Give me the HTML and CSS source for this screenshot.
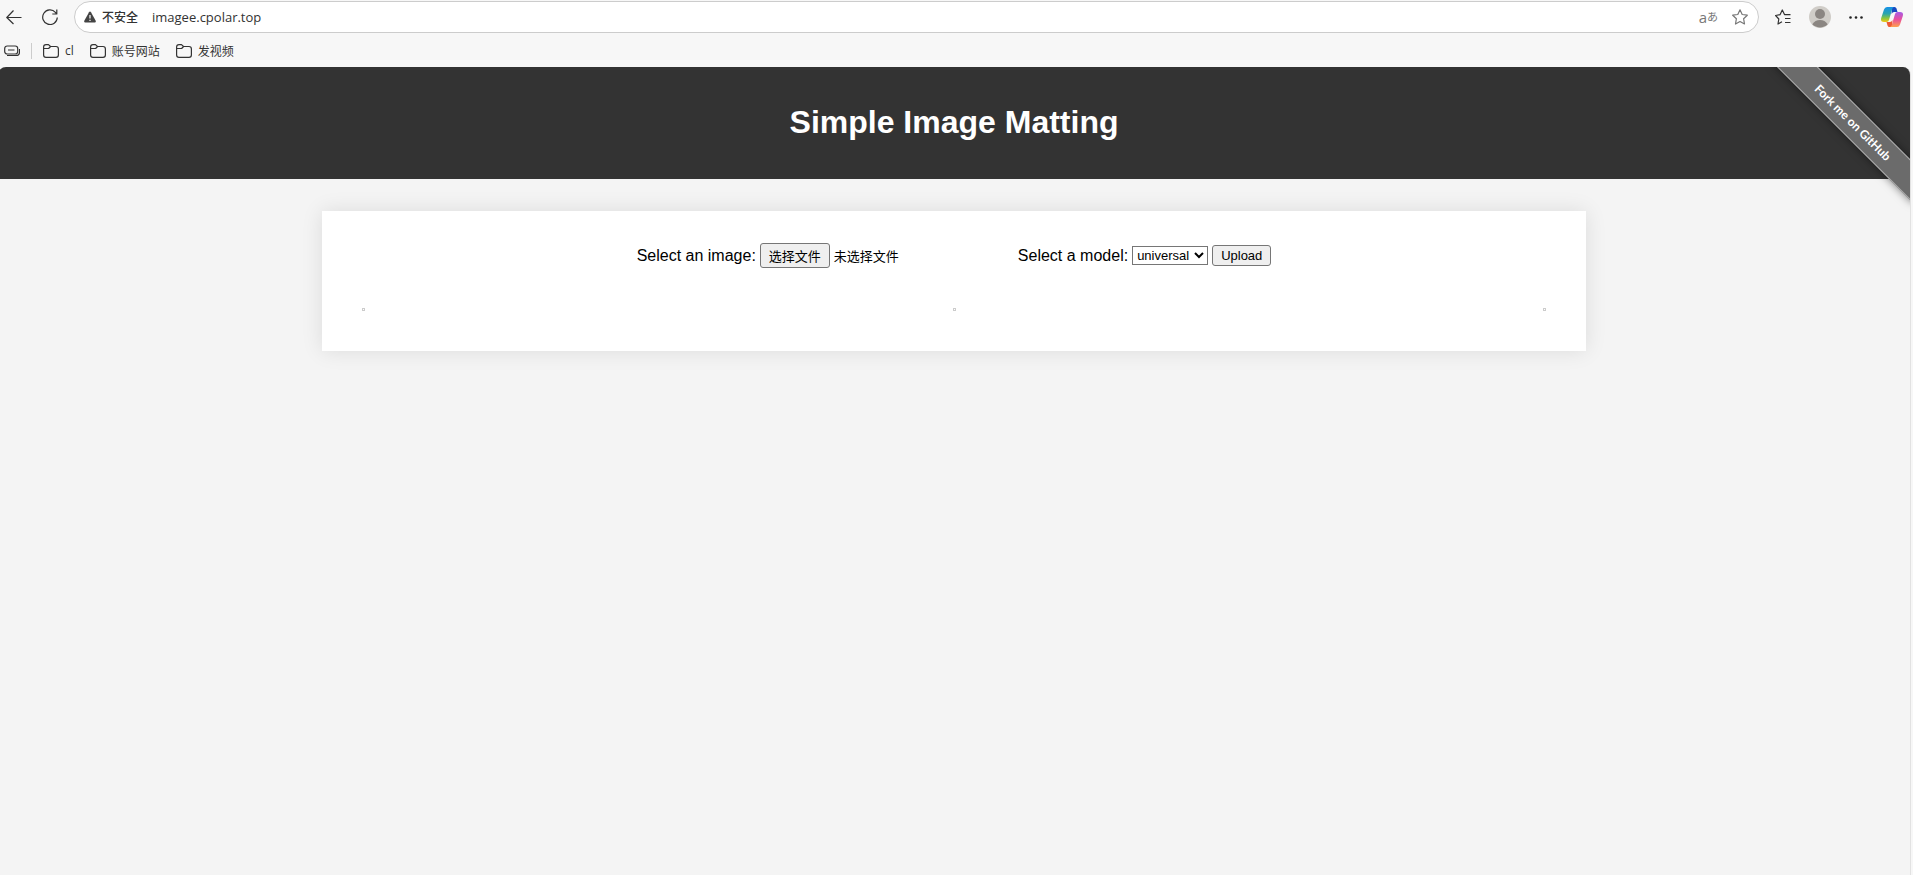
FILE: index.html
```html
<!DOCTYPE html>
<html lang="zh-CN">
<head>
  <meta charset="utf-8">
  <title>Simple Image Matting</title>
  <meta name="viewport" content="width=device-width, initial-scale=1">
  <link rel="stylesheet" href="styles.css">
</head>
<body>
  <!-- Browser toolbar -->
  <div class="toolbar">
    <button class="icon-button" aria-label="Back">
      <svg width="16" height="16" viewBox="0 0 16 16"><path d="M15.500 8.500H.8M7.500 1.500L.8 8.500l6.700 6.500"/></svg>
    </button>
    <button class="icon-button" aria-label="Refresh">
      <svg width="16" height="16" viewBox="0 0 16 16"><path d="M15.300 8.500a7.300 7.300 0 1 1-1.900-5.200l1.300 1.500M14.800.5v4.500h-4.500"/></svg>
    </button>
    <div class="address">
      <svg class="warning" width="12" height="12" viewBox="0 0 12 12"><path d="M6 .5Q6.600.5 7 1.200l4.700 8.600q.5 1.500-.9 1.700H1.200Q-.2 11.300.3 9.800L5 1.200Q5.400.5 6 .5z"/><path class="mark" d="M6 4v3.500M6 8.700v1.200"/></svg>
      <span class="insecure">不安全</span>
      <input class="url" type="text" value="imagee.cpolar.top" aria-label="Address">
      <button class="translate" aria-label="Translate"><span>a</span><small>あ</small></button>
      <button class="icon-button muted" aria-label="Add to favorites">
        <svg width="16" height="16" viewBox="0 0 16 16"><path d="M8 .8l2.200 4.700 5.100.7-3.700 3.500.9 5.300L8 12.500 3.500 15l.9-5.300L.7 6.200l5.100-.7z"/></svg>
      </button>
    </div>
    <div class="actions">
      <button class="icon-button" aria-label="Favorites">
        <svg width="16" height="16" viewBox="0 0 16 16"><path d="M7 12.800L3 15l.8-5L.6 6.500l4.400-.8L7.300 1l2.200 4.600h6M10 9.500h5.500M10 13.500h5.500"/></svg>
      </button>
      <button class="icon-button" aria-label="Profile">
        <svg class="filled" width="22" height="22" viewBox="0 0 22 22"><circle cx="11" cy="11" r="11" fill="#d0cdc8"/><circle cx="11" cy="8" r="5" fill="#8b8682"/><path d="M3.300 18.300Q6 14 11 14t7.700 4.300A11 11 0 0 1 3.300 18.300z" fill="#8b8682"/></svg>
      </button>
      <button class="icon-button" aria-label="More">
        <svg class="filled" width="14" height="16" viewBox="0 0 14 16"><circle cx="1.500" cy="8.500" r="1.300"/><circle cx="7" cy="8.500" r="1.300"/><circle cx="12.500" cy="8.500" r="1.300"/></svg>
      </button>
      <button class="icon-button" aria-label="Copilot">
        <svg class="filled" width="22" height="20" viewBox="0 0 22 20">
          <defs>
            <linearGradient id="cool" x1="0" y1="0" x2="0" y2="1"><stop offset="0" stop-color="#1590e8"/><stop offset=".45" stop-color="#2aa5ad"/><stop offset=".75" stop-color="#8ac53e"/><stop offset="1" stop-color="#f4c715"/></linearGradient>
            <linearGradient id="warm" x1="0" y1="0" x2="0" y2="1"><stop offset="0" stop-color="#a55be8"/><stop offset=".5" stop-color="#e94f9c"/><stop offset="1" stop-color="#ffa04c"/></linearGradient>
          </defs>
          <path fill="#1749c0" d="M11 0h2.500q1.500 0 2 1.500L16.500 5H13q-1.500 0-2.500 2z"/>
          <path fill="#ee5a35" d="M5.500 15H9q1.500 0 2.500-2L11 20H8.500Q7 20 6.500 18.500z"/>
          <path fill="url(#cool)" d="M6 0h7q-1.300.3-1.800 2L8 13q-.6 2-2.500 2H3Q-.8 15 .2 11L3 2.500Q3.800 0 6 0z"/>
          <path fill="url(#warm)" d="M16 20H9q1.300-.3 1.800-2L14 7q.6-2 2.500-2H19q3.800 0 2.800 4L19 17.500q-.8 2.500-3 2.500z"/>
        </svg>
      </button>
    </div>
  </div>

  <!-- Bookmarks bar -->
  <nav class="bookmarks">
    <svg width="16" height="12" viewBox="0 0 16 12"><rect x=".7" y="1" width="13" height="8" rx="2.500"/><path d="M4 5h6.500M3 10.500h9q3.500 0 3.500-3.500V4"/></svg>
    <span class="divider"></span>
    <a href="#"><svg width="16" height="14" viewBox="0 0 16 14"><path d="M.6 3Q.6.6 3 .6h2.500L7.500 2.500H13Q15.400 2.500 15.400 5v6q0 2.400-2.400 2.400H3Q.6 13.400.6 11zM.6 4.500h5l2-2"/></svg>cl</a>
    <a href="#"><svg width="16" height="14" viewBox="0 0 16 14"><path d="M.6 3Q.6.6 3 .6h2.500L7.500 2.500H13Q15.400 2.500 15.400 5v6q0 2.400-2.400 2.400H3Q.6 13.400.6 11zM.6 4.500h5l2-2"/></svg>账号网站</a>
    <a href="#"><svg width="16" height="14" viewBox="0 0 16 14"><path d="M.6 3Q.6.6 3 .6h2.500L7.500 2.500H13Q15.400 2.500 15.400 5v6q0 2.400-2.400 2.400H3Q.6 13.400.6 11zM.6 4.500h5l2-2"/></svg>发视频</a>
  </nav>

  <!-- Page -->
  <div class="page">
    <header>
      <h1>Simple Image Matting</h1>
    </header>
    <div class="ribbon-corner">
      <a class="ribbon" href="#">Fork me on GitHub</a>
    </div>

    <main class="container">
      <form class="upload-form" onsubmit="return false">
        <label for="pick">Select an image:</label>
        <div class="file-field">
          <button type="button" id="pick" onclick="document.getElementById('image').click()">选择文件</button>
          <span id="file-name">未选择文件</span>
          <input type="file" id="image" accept="image/*" hidden onchange="showName(this)">
        </div>
        <label for="model">Select a model:</label>
        <select id="model">
          <option>universal</option>
          <option>people</option>
        </select>
        <button type="submit" class="upload">Upload</button>
      </form>

      <div class="images">
        <div class="image"></div>
        <div class="image"></div>
        <div class="image"></div>
      </div>
    </main>
  </div>

  <script>
    // Show the name of the picked file
    function showName(input) {
      document.getElementById("file-name").textContent = input.files.length ? input.files[0].name : "未选择文件";
    }
  </script>
</body>
</html>
```
FILE: styles.css
```css
* {
  box-sizing: border-box;
}

body {
  display: flex;
  flex-direction: column;
  min-height: 100vh;
  margin: 0;
  background-color: #f7f7f7;
  font-family: "Liberation Sans", "Noto Sans CJK SC", sans-serif;
}

svg {
  display: block;
  flex: none;
  fill: none;
  stroke: #333;
  stroke-width: 1.2;
  stroke-linejoin: round;
}

.filled {
  fill: #222;
  stroke: none;
}

/* Browser toolbar */
.toolbar {
  display: flex;
  align-items: center;
  height: 34px;
  padding: 0 10px 0 6px;
  gap: 20px;
  font-family: "Open Sans", "Noto Sans CJK SC", sans-serif;
}

.icon-button {
  padding: 0;
  border: none;
  background: none;
}

.muted svg {
  stroke: #777;
}

.address {
  display: flex;
  flex: 1;
  align-items: center;
  height: 32px;
  margin-left: -4px;
  padding: 0 10px 0 9px;
  border: 1px solid #ccc;
  border-radius: 16px;
  background-color: #fff;
}

.warning {
  fill: #444;
  stroke: none;
}

.warning .mark {
  stroke: #fff;
}

.insecure {
  margin-left: 6px;
  color: #333;
  font-size: 12px;
  font-weight: 500;
}

.url {
  flex: 1;
  margin-left: 14px;
  padding: 0;
  border: none;
  outline: none;
  background: none;
  color: #333;
  font-family: inherit;
  font-size: 13px;
}

.translate {
  display: flex;
  align-items: center;
  margin-right: 14px;
  padding: 0;
  border: none;
  background: none;
  color: #777;
  font-family: inherit;
  font-size: 15px;
  line-height: 16px;
}

.translate small {
  font-size: 11px;
}

.actions {
  display: flex;
  align-items: center;
  margin-left: -4px;
  gap: 18px;
}

/* Bookmarks bar */
.bookmarks {
  display: flex;
  align-items: center;
  height: 33px;
  padding: 0 4px;
  gap: 16px;
  font-family: "Open Sans", "Noto Sans CJK SC", sans-serif;
  font-size: 12px;
}

.bookmarks .divider {
  width: 1px;
  height: 16px;
  margin: 0 -5px;
  background-color: #ccc;
}

.bookmarks a {
  display: flex;
  align-items: center;
  gap: 6px;
  color: #333;
  text-decoration: none;
}

/* Page */
.page {
  position: relative;
  flex: 1;
  margin: 0 2px 0 -2px;
  overflow: hidden;
  border-right: 1px solid #e2e2e2;
  border-radius: 8px 8px 0 0;
  background-color: #f4f4f4;
}

header {
  padding: 16px;
  background-color: #333;
  color: #fff;
  text-align: center;
}

h1 {
  margin: 0;
  padding: 21px 0 23px;
  font-size: 32px;
  line-height: 36px;
}

/* Ribbon in the top right corner */
.ribbon-corner {
  position: absolute;
  top: 0;
  right: 0;
  width: 150px;
  height: 150px;
  overflow: hidden;
}

.ribbon {
  position: absolute;
  top: 41px;
  right: -43px;
  width: 200px;
  height: 29px;
  border: 1px solid #aaa;
  background-color: #6b6b6b;
  box-shadow: 0 0 8px rgba(0, 0, 0, 0.5);
  color: #fff;
  font-family: Lato, sans-serif;
  font-size: 12px;
  font-weight: bold;
  line-height: 28px;
  text-align: center;
  text-decoration: none;
  transform: rotate(45deg);
}

.container {
  max-width: 1264px;
  margin: 32px auto;
  padding: 32px;
  background-color: #fff;
  box-shadow: 0 0 20px rgba(0, 0, 0, 0.1);
}

.upload-form {
  display: flex;
  justify-content: center;
  align-items: center;
  height: 25px;
  gap: 4px;
  font-size: 16px;
}

.file-field {
  display: flex;
  align-items: center;
  width: 254px;
  gap: 4px;
  font-size: 13px;
}

.upload-form button {
  height: 25px;
  padding: 0 8px;
  border: 1px solid #767676;
  border-radius: 3px;
  background-color: #efefef;
  color: #000;
  font-family: inherit;
  font-size: 13px;
}

.upload-form select {
  width: 76px;
  height: 19px;
  border: 1px solid #767676;
  background-color: #fff;
  color: #000;
  font-family: inherit;
  font-size: 13px;
}

.upload-form .upload {
  height: 21px;
  padding: 0 8px;
}

.images {
  display: flex;
  justify-content: space-between;
  margin-top: 32px;
}

.image {
  min-width: 3px;
  min-height: 3px;
  margin: 8px;
  border: 1px solid #ccc;
}
```
